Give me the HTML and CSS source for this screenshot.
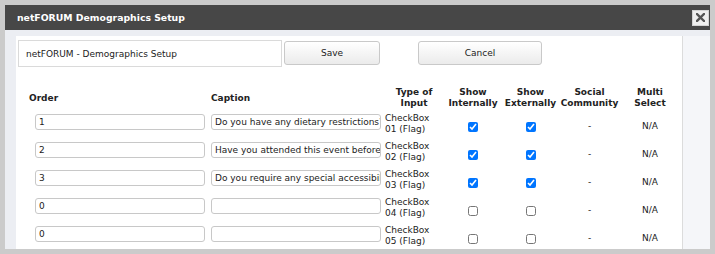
FILE: index.html
```html
<!DOCTYPE html>
<html lang="en">
<head>
    <meta charset="UTF-8">
    <title>netFORUM Demographics Setup</title>
    <link rel="stylesheet" href="styles.css">
</head>
<body>
    <div class="dialog">
        <div class="titlebar">
            <span class="title">netFORUM Demographics Setup</span>
            <button class="close" type="button">
                <svg width="9" height="9" viewBox="0 0 9 9"><path d="M1 1L8 8M8 1L1 8" stroke="#555" stroke-width="2.4" stroke-linecap="square"/></svg>
            </button>
        </div>
        <div class="dialog-body">
            <div class="panel">
                <div class="top-row">
                    <input class="setup-name" type="text" value="netFORUM - Demographics Setup">
                    <button class="btn btn-save" type="button">Save</button>
                    <button class="btn btn-cancel" type="button">Cancel</button>
                </div>

                <table class="demo-table">
                    <colgroup>
                        <col class="c-order">
                        <col class="c-caption">
                        <col class="c-type">
                        <col class="c-int">
                        <col class="c-ext">
                        <col class="c-social">
                        <col class="c-multi">
                    </colgroup>
                    <thead>
                        <tr>
                            <th class="left">Order</th>
                            <th class="left">Caption</th>
                            <th>Type of<br>Input</th>
                            <th>Show<br>Internally</th>
                            <th>Show<br>Externally</th>
                            <th>Social<br>Community</th>
                            <th>Multi<br>Select</th>
                        </tr>
                    </thead>
                    <tbody>
                        <tr>
                            <td><input class="order" type="text" value="1"></td>
                            <td><input class="caption" type="text" value="Do you have any dietary restrictions?"></td>
                            <td class="type">CheckBox<br>01 (Flag)</td>
                            <td class="mid"><input type="checkbox" checked></td>
                            <td class="mid"><input type="checkbox" checked></td>
                            <td class="mid">-</td>
                            <td class="mid">N/A</td>
                        </tr>
                        <tr>
                            <td><input class="order" type="text" value="2"></td>
                            <td><input class="caption" type="text" value="Have you attended this event before?"></td>
                            <td class="type">CheckBox<br>02 (Flag)</td>
                            <td class="mid"><input type="checkbox" checked></td>
                            <td class="mid"><input type="checkbox" checked></td>
                            <td class="mid">-</td>
                            <td class="mid">N/A</td>
                        </tr>
                        <tr>
                            <td><input class="order" type="text" value="3"></td>
                            <td><input class="caption" type="text" value="Do you require any special accessibility accommodations?"></td>
                            <td class="type">CheckBox<br>03 (Flag)</td>
                            <td class="mid"><input type="checkbox" checked></td>
                            <td class="mid"><input type="checkbox" checked></td>
                            <td class="mid">-</td>
                            <td class="mid">N/A</td>
                        </tr>
                        <tr>
                            <td><input class="order" type="text" value="0"></td>
                            <td><input class="caption" type="text" value=""></td>
                            <td class="type">CheckBox<br>04 (Flag)</td>
                            <td class="mid"><input type="checkbox"></td>
                            <td class="mid"><input type="checkbox"></td>
                            <td class="mid">-</td>
                            <td class="mid">N/A</td>
                        </tr>
                        <tr>
                            <td><input class="order" type="text" value="0"></td>
                            <td><input class="caption" type="text" value=""></td>
                            <td class="type">CheckBox<br>05 (Flag)</td>
                            <td class="mid"><input type="checkbox"></td>
                            <td class="mid"><input type="checkbox"></td>
                            <td class="mid">-</td>
                            <td class="mid">N/A</td>
                        </tr>
                    </tbody>
                </table>
            </div>
            <div class="side"></div>
        </div>
    </div>
</body>
</html>
```

FILE: styles.css
```css
html, body {
    margin: 0;
    height: 254px;
    overflow: hidden;
}
body {
    background-color: #cbcbcb;
    font-family: 'DejaVu Sans', Verdana, sans-serif;
    font-size: 9px;
    color: #222;
}
.dialog {
    margin: 5px;
    height: 244px;
    display: flex;
    flex-direction: column;
}
.titlebar {
    height: 25px;
    background-color: #474747;
    display: flex;
    align-items: center;
    justify-content: space-between;
    padding-left: 12px;
    padding-right: 1px;
    flex-shrink: 0;
}
.title {
    color: #fff;
    font-weight: bold;
    font-size: 9.3px;
}
.close {
    width: 17px;
    height: 16px;
    padding: 0;
    margin: 0;
    border: 1px solid #d4d4d4;
    background-color: #efefef;
    display: flex;
    align-items: center;
    justify-content: center;
}
.dialog-body {
    flex: 1;
    background-color: #eceef3;
    padding: 6px 0 0 11px;
    display: flex;
    overflow: hidden;
}
.panel {
    width: 664px;
    background-color: #fff;
    border-right: 1px solid #dcdcdc;
    padding: 4px 0 0 2px;
    flex-shrink: 0;
}
.side {
    flex: 1;
    background-color: #f5f6f9;
}
.top-row {
    display: flex;
    align-items: flex-start;
}
input[type="text"] {
    font-family: 'DejaVu Sans', Verdana, sans-serif;
    font-size: 9px;
    color: #222;
    box-sizing: border-box;
    margin: 0;
    outline: none;
}
.setup-name {
    width: 264px;
    height: 27px;
    border: 1px solid #dadada;
    padding: 0 0 0 7px;
}
.btn {
    font-family: 'DejaVu Sans', Verdana, sans-serif;
    font-size: 9px;
    color: #222;
    height: 24px;
    margin: 1px 0 0 0;
    border: 1px solid #c9c9c9;
    border-radius: 3px;
    background: linear-gradient(#ffffff, #ebebeb);
    padding: 0;
}
.btn-save {
    width: 96px;
    margin-left: 2px;
}
.btn-cancel {
    width: 124px;
    margin-left: 38px;
}
.demo-table {
    margin: 18px 0 0 11px;
    border-collapse: collapse;
    table-layout: fixed;
    width: 651px;
}
.c-order { width: 182px; }
.c-caption { width: 173px; }
.c-type { width: 60px; }
.c-int { width: 58px; }
.c-ext { width: 57px; }
.c-social { width: 61px; }
.c-multi { width: 60px; }

.demo-table th {
    height: 26px;
    padding: 0;
    line-height: 11px;
    font-weight: bold;
    text-align: center;
    vertical-align: middle;
}
.demo-table th.left {
    text-align: left;
}
.demo-table tbody tr {
    height: 28px;
}
.demo-table td {
    padding: 0;
    vertical-align: top;
}
.order, .caption {
    width: 170px;
    height: 16px;
    margin-top: 3px !important;
    border: 1px solid #c8c8c8;
    border-radius: 3px;
    padding: 0 0 0 3px;
}
.order {
    margin-left: 6px !important;
}
.demo-table td.type {
    padding: 2px 0 0 1px;
    line-height: 11px;
}
.demo-table td.mid {
    text-align: center;
    vertical-align: middle;
    padding-top: 3px;
    line-height: 11px;
}
input[type="checkbox"] {
    width: 10px;
    height: 10px;
    margin: 0;
    vertical-align: middle;
}
```
